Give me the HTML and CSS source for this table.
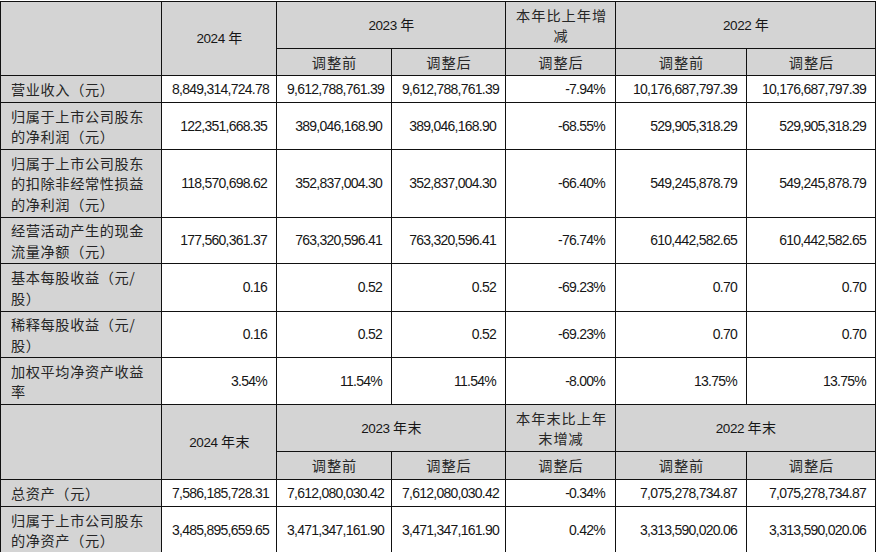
FILE: index.html
```html
<!DOCTYPE html>
<html lang="zh">
<head>
<meta charset="utf-8">
<title>主要会计数据</title>
<link rel="stylesheet" href="styles.css">
</head>
<body>
<table class="fin">
  <colgroup>
    <col class="c-label">
    <col class="c-a">
    <col class="c-b">
    <col class="c-c">
    <col class="c-d">
    <col class="c-e">
    <col class="c-f">
  </colgroup>
  <tbody>
    <tr class="r47">
      <th class="hd" rowspan="2"></th>
      <th class="hd yr" rowspan="2">2024 <span class="cj">年</span></th>
      <th class="hd yr" colspan="2">2023 <span class="cj">年</span></th>
      <th class="hd cn">本年比上年增<br>减</th>
      <th class="hd yr" colspan="2">2022 <span class="cj">年</span></th>
    </tr>
    <tr class="r27">
      <th class="hd cn">调整前</th>
      <th class="hd cn">调整后</th>
      <th class="hd cn">调整后</th>
      <th class="hd cn">调整前</th>
      <th class="hd cn">调整后</th>
    </tr>
    <tr class="r27">
      <th class="lbl">营业收入（元）</th>
      <td>8,849,314,724.78</td>
      <td>9,612,788,761.39</td>
      <td>9,612,788,761.39</td>
      <td class="pct">-7.94%</td>
      <td>10,176,687,797.39</td>
      <td>10,176,687,797.39</td>
    </tr>
    <tr class="r47">
      <th class="lbl">归属于上市公司股东<br>的净利润（元）</th>
      <td>122,351,668.35</td>
      <td>389,046,168.90</td>
      <td>389,046,168.90</td>
      <td class="pct">-68.55%</td>
      <td>529,905,318.29</td>
      <td>529,905,318.29</td>
    </tr>
    <tr class="r68">
      <th class="lbl">归属于上市公司股东<br>的扣除非经常性损益<br>的净利润（元）</th>
      <td>118,570,698.62</td>
      <td>352,837,004.30</td>
      <td>352,837,004.30</td>
      <td class="pct">-66.40%</td>
      <td>549,245,878.79</td>
      <td>549,245,878.79</td>
    </tr>
    <tr class="r46">
      <th class="lbl">经营活动产生的现金<br>流量净额（元）</th>
      <td>177,560,361.37</td>
      <td>763,320,596.41</td>
      <td>763,320,596.41</td>
      <td class="pct">-76.74%</td>
      <td>610,442,582.65</td>
      <td>610,442,582.65</td>
    </tr>
    <tr class="r48">
      <th class="lbl">基本每股收益（元/<br>股）</th>
      <td>0.16</td>
      <td>0.52</td>
      <td>0.52</td>
      <td class="pct">-69.23%</td>
      <td>0.70</td>
      <td>0.70</td>
    </tr>
    <tr class="r46">
      <th class="lbl">稀释每股收益（元/<br>股）</th>
      <td>0.16</td>
      <td>0.52</td>
      <td>0.52</td>
      <td class="pct">-69.23%</td>
      <td>0.70</td>
      <td>0.70</td>
    </tr>
    <tr class="r47">
      <th class="lbl">加权平均净资产收益<br>率</th>
      <td>3.54%</td>
      <td>11.54%</td>
      <td>11.54%</td>
      <td class="pct">-8.00%</td>
      <td>13.75%</td>
      <td>13.75%</td>
    </tr>
    <tr class="r47">
      <th class="hd" rowspan="2"></th>
      <th class="hd yr" rowspan="2">2024 <span class="cj">年末</span></th>
      <th class="hd yr" colspan="2">2023 <span class="cj">年末</span></th>
      <th class="hd cn">本年末比上年<br>末增减</th>
      <th class="hd yr" colspan="2">2022 <span class="cj">年末</span></th>
    </tr>
    <tr class="r28">
      <th class="hd cn">调整前</th>
      <th class="hd cn">调整后</th>
      <th class="hd cn">调整后</th>
      <th class="hd cn">调整前</th>
      <th class="hd cn">调整后</th>
    </tr>
    <tr class="r27">
      <th class="lbl">总资产（元）</th>
      <td>7,586,185,728.31</td>
      <td>7,612,080,030.42</td>
      <td>7,612,080,030.42</td>
      <td class="pct">-0.34%</td>
      <td>7,075,278,734.87</td>
      <td>7,075,278,734.87</td>
    </tr>
    <tr class="r47">
      <th class="lbl">归属于上市公司股东<br>的净资产（元）</th>
      <td>3,485,895,659.65</td>
      <td>3,471,347,161.90</td>
      <td>3,471,347,161.90</td>
      <td class="pct">0.42%</td>
      <td>3,313,590,020.06</td>
      <td>3,313,590,020.06</td>
    </tr>
  </tbody>
</table>
</body>
</html>
```
FILE: styles.css
```css
html, body {
  margin: 0;
  padding: 0;
  background: #ffffff;
}

body {
  padding-top: 1px;
  font-family: "Liberation Sans", "Noto Sans CJK SC", sans-serif;
  color: #161616;
}

.fin {
  border-collapse: collapse;
  table-layout: fixed;
  width: 875px;
}

.c-label { width: 161px; }
.c-a { width: 115px; }
.c-b { width: 115px; }
.c-c { width: 114px; }
.c-d { width: 110px; }
.c-e { width: 131px; }
.c-f { width: 129px; }

.fin th,
.fin td {
  border: 1px solid #111;
  padding: 0 9px 0 10px;
  vertical-align: middle;
  line-height: 20.5px;
  overflow: hidden;
  white-space: nowrap;
}

.fin td {
  text-align: right;
  font-size: 14px;
  letter-spacing: -0.75px;
  background: #ffffff;
}

.fin td.pct {
  padding-right: 10px;
}

.fin th {
  font-weight: normal;
  background: #d4d4d4;
}

.lbl {
  text-align: left;
  font-family: "Noto Sans CJK SC", sans-serif;
  font-size: 14.2px;
  letter-spacing: 0.6px;
  font-weight: 300;
  color: #262626;
}

.hd {
  text-align: center;
}

.hd.yr {
  font-size: 13.5px;
  letter-spacing: -0.4px;
}

.hd .cj {
  font-family: "Noto Sans CJK SC", sans-serif;
  font-size: 14px;
  letter-spacing: 0.4px;
}

.hd.cn {
  font-family: "Noto Sans CJK SC", sans-serif;
  font-size: 14.2px;
  letter-spacing: 1px;
  color: #262626;
}

.r27 { height: 27px; }
.r28 { height: 28px; }
.r46 { height: 46px; }
.r47 { height: 47px; }
.r48 { height: 48px; }
.r68 { height: 68px; }
```
